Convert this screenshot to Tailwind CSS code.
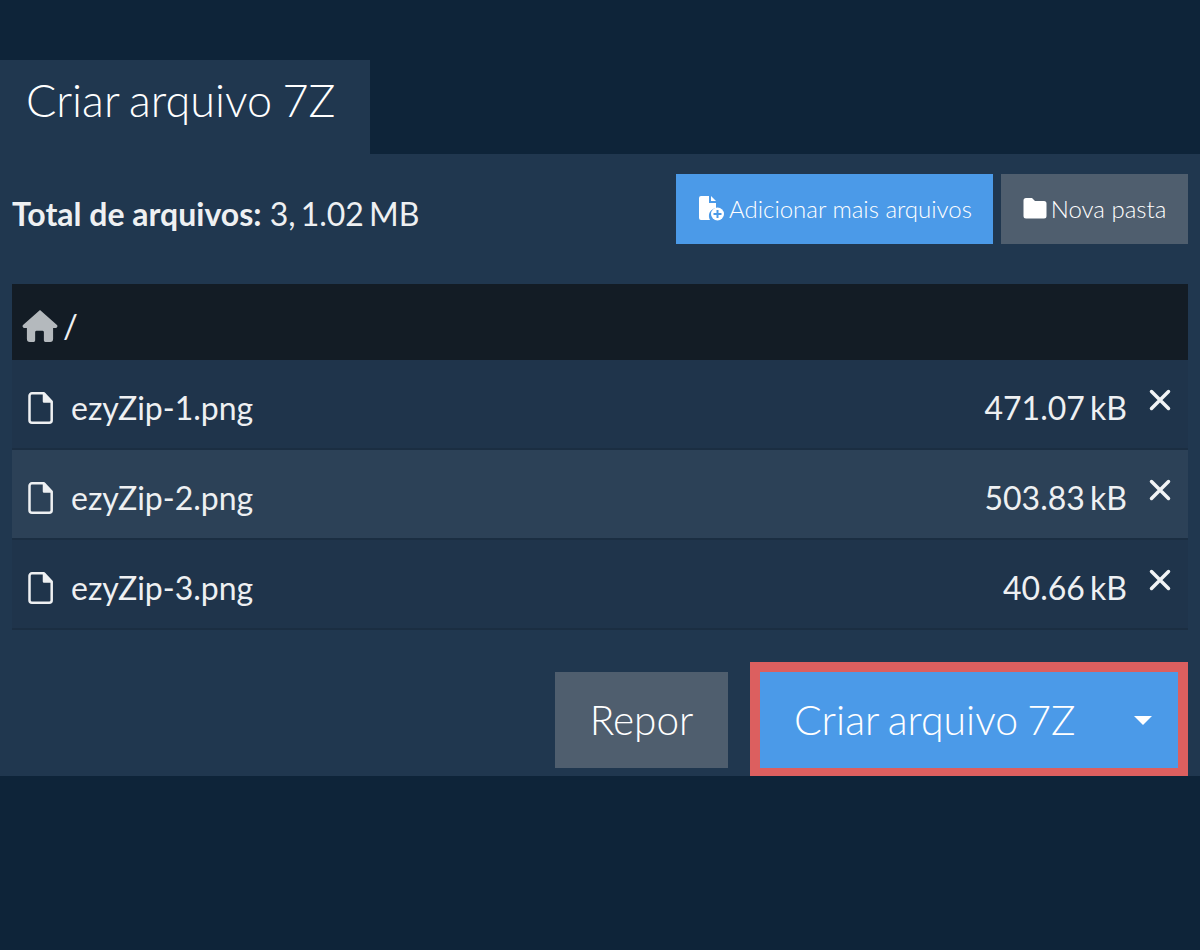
<!DOCTYPE html>
<html lang="pt">
<head>
<meta charset="utf-8">
<script src="https://cdn.jsdelivr.net/npm/@tailwindcss/browser@4"></script>
</head>
<body class="m-0 bg-[#0e2439] font-['Lato','Open_Sans',sans-serif] text-[#eef0f2]">
<div class="w-[1200px] h-[950px] pt-[60px] overflow-hidden">
  <div class="w-[370px] h-[94px] bg-[#20374f] pl-[26px] flex items-center text-[45px] font-light text-white leading-none pb-[14px] [word-spacing:-2px]">Criar arquivo 7Z</div>
  <main class="h-[622px] bg-[#20374f] px-[12px]">
    <div class="flex justify-between h-[130px] pt-[20px]">
      <div class="text-[32px] leading-[42px] pt-[19px]"><b class="font-bold">Total de arquivos:</b> <span class="[word-spacing:-3px]">3, 1.02 MB</span></div>
      <div class="flex gap-[8px] h-[70px]">
        <button class="w-[317px] bg-[#4b9ae8] text-white text-[24px] font-light flex items-center justify-center gap-[2px]">
          <svg class="w-[30px] h-[26px] mb-[2px]" viewBox="0 0 28 26" fill="#fff"><path d="M3 1h8v7h7v5a8 8 0 0 0-6 12H3a2 2 0 0 1-2-2V3a2 2 0 0 1 2-2z"/><path d="M13 1l5 5h-5z"/><circle cx="19.500" cy="19" r="6.500"/><path d="M19.500 15v8M15.500 19h8" stroke="#4b9ae8" stroke-width="2"/></svg>
          <span>Adicionar mais arquivos</span>
        </button>
        <button class="w-[187px] bg-[#4f5e6e] text-white text-[24px] font-light flex items-center justify-center gap-[4px]">
          <svg class="w-[24px] h-[22px] mb-[2px]" viewBox="0 0 24 22" fill="#fff"><path d="M3 1h6l3 3h9a2.500 2.500 0 0 1 2.500 2.500V19a2.500 2.500 0 0 1-2.500 2.500H3A2.500 2.500 0 0 1 .5 19V3.500A2.500 2.500 0 0 1 3 1z"/></svg>
          <span>Nova pasta</span>
        </button>
      </div>
    </div>
    <div class="h-[76px] bg-[#131c25] flex items-center pl-[10px] text-[33px] gap-[5px] pt-[8px]">
      <svg class="w-[36px] h-[32px]" viewBox="0 0 37 33" fill="#b4b9bd"><path d="M18.500 0 36 15.500a1.800 1.800 0 0 1-1 3h-3V30a3 3 0 0 1-3 3h-5a1.500 1.500 0 0 1-1.500-1.500V23a1.500 1.500 0 0 0-1.500-1.500h-6A1.500 1.500 0 0 0 13.500 23v8.500A1.500 1.500 0 0 1 12 33H8a3 3 0 0 1-3-3V18.500H2a1.800 1.800 0 0 1-1-3z"/></svg>
      <span>/</span>
    </div>
    <ul>
      <li class="h-[90px] bg-[#1f344b] border-b-2 border-[#1b2e42] flex items-center pl-[16px] pt-[8px] text-[32px]">
        <svg class="w-[25px] h-[32px]" viewBox="0 0 25 32" fill="none" stroke="#eef0f2" stroke-width="2.500" stroke-linejoin="round"><path d="M4 1.300h12l7.700 8.200v18.700a2.500 2.500 0 0 1-2.500 2.500H4a2.500 2.500 0 0 1-2.500-2.500V3.800A2.500 2.500 0 0 1 4 1.300z"/><path d="M16 1.300V9.500h7.700" fill="#eef0f2"/></svg>
        <span class="ml-[18px]">ezyZip-1.png</span>
        <span class="ml-auto [word-spacing:-3px]">471.07 kB</span>
        <span class="w-[22px] ml-[22px] mr-[17px] mb-[16px]"><svg class="w-[22px] h-[22px]" viewBox="0 0 22 22" stroke="#f2f4f6" stroke-width="3.500" stroke-linecap="round"><path d="M2.500 2.500l17 17M19.500 2.500l-17 17"/></svg></span>
      </li>
      <li class="h-[90px] bg-[#2c4157] border-b-2 border-[#1b2e42] flex items-center pl-[16px] pt-[8px] text-[32px]">
        <svg class="w-[25px] h-[32px]" viewBox="0 0 25 32" fill="none" stroke="#eef0f2" stroke-width="2.500" stroke-linejoin="round"><path d="M4 1.300h12l7.700 8.200v18.700a2.500 2.500 0 0 1-2.500 2.500H4a2.500 2.500 0 0 1-2.500-2.500V3.800A2.500 2.500 0 0 1 4 1.300z"/><path d="M16 1.300V9.500h7.700" fill="#eef0f2"/></svg>
        <span class="ml-[18px]">ezyZip-2.png</span>
        <span class="ml-auto [word-spacing:-3px]">503.83 kB</span>
        <span class="w-[22px] ml-[22px] mr-[17px] mb-[16px]"><svg class="w-[22px] h-[22px]" viewBox="0 0 22 22" stroke="#f2f4f6" stroke-width="3.500" stroke-linecap="round"><path d="M2.500 2.500l17 17M19.500 2.500l-17 17"/></svg></span>
      </li>
      <li class="h-[90px] bg-[#1f344b] border-b-2 border-[#1b2e42] flex items-center pl-[16px] pt-[8px] text-[32px]">
        <svg class="w-[25px] h-[32px]" viewBox="0 0 25 32" fill="none" stroke="#eef0f2" stroke-width="2.500" stroke-linejoin="round"><path d="M4 1.300h12l7.700 8.200v18.700a2.500 2.500 0 0 1-2.500 2.500H4a2.500 2.500 0 0 1-2.500-2.500V3.800A2.500 2.500 0 0 1 4 1.300z"/><path d="M16 1.300V9.500h7.700" fill="#eef0f2"/></svg>
        <span class="ml-[18px]">ezyZip-3.png</span>
        <span class="ml-auto [word-spacing:-3px]">40.66 kB</span>
        <span class="w-[22px] ml-[22px] mr-[17px] mb-[16px]"><svg class="w-[22px] h-[22px]" viewBox="0 0 22 22" stroke="#f2f4f6" stroke-width="3.500" stroke-linecap="round"><path d="M2.500 2.500l17 17M19.500 2.500l-17 17"/></svg></span>
      </li>
    </ul>
    <div class="flex justify-end items-start mt-[32px]">
      <button class="w-[173px] h-[96px] mt-[10px] bg-[#4f5e6e] text-white text-[40.5px] font-light">Repor</button>
      <div class="ml-[22px] w-[438px] h-[114px] border-[#dc5f5f] border-x-[10px] border-t-[10px] border-b-[8px] bg-[#4b9ae8] flex items-center text-white text-[41px] font-light pl-[34px] [word-spacing:-2px]">
        <span>Criar arquivo 7Z</span>
        <span class="ml-auto mr-[26px] w-0 h-0 border-x-[9px] border-x-transparent border-t-[9px] border-t-white"></span>
      </div>
    </div>
  </main>
</div>
</body>
</html>
